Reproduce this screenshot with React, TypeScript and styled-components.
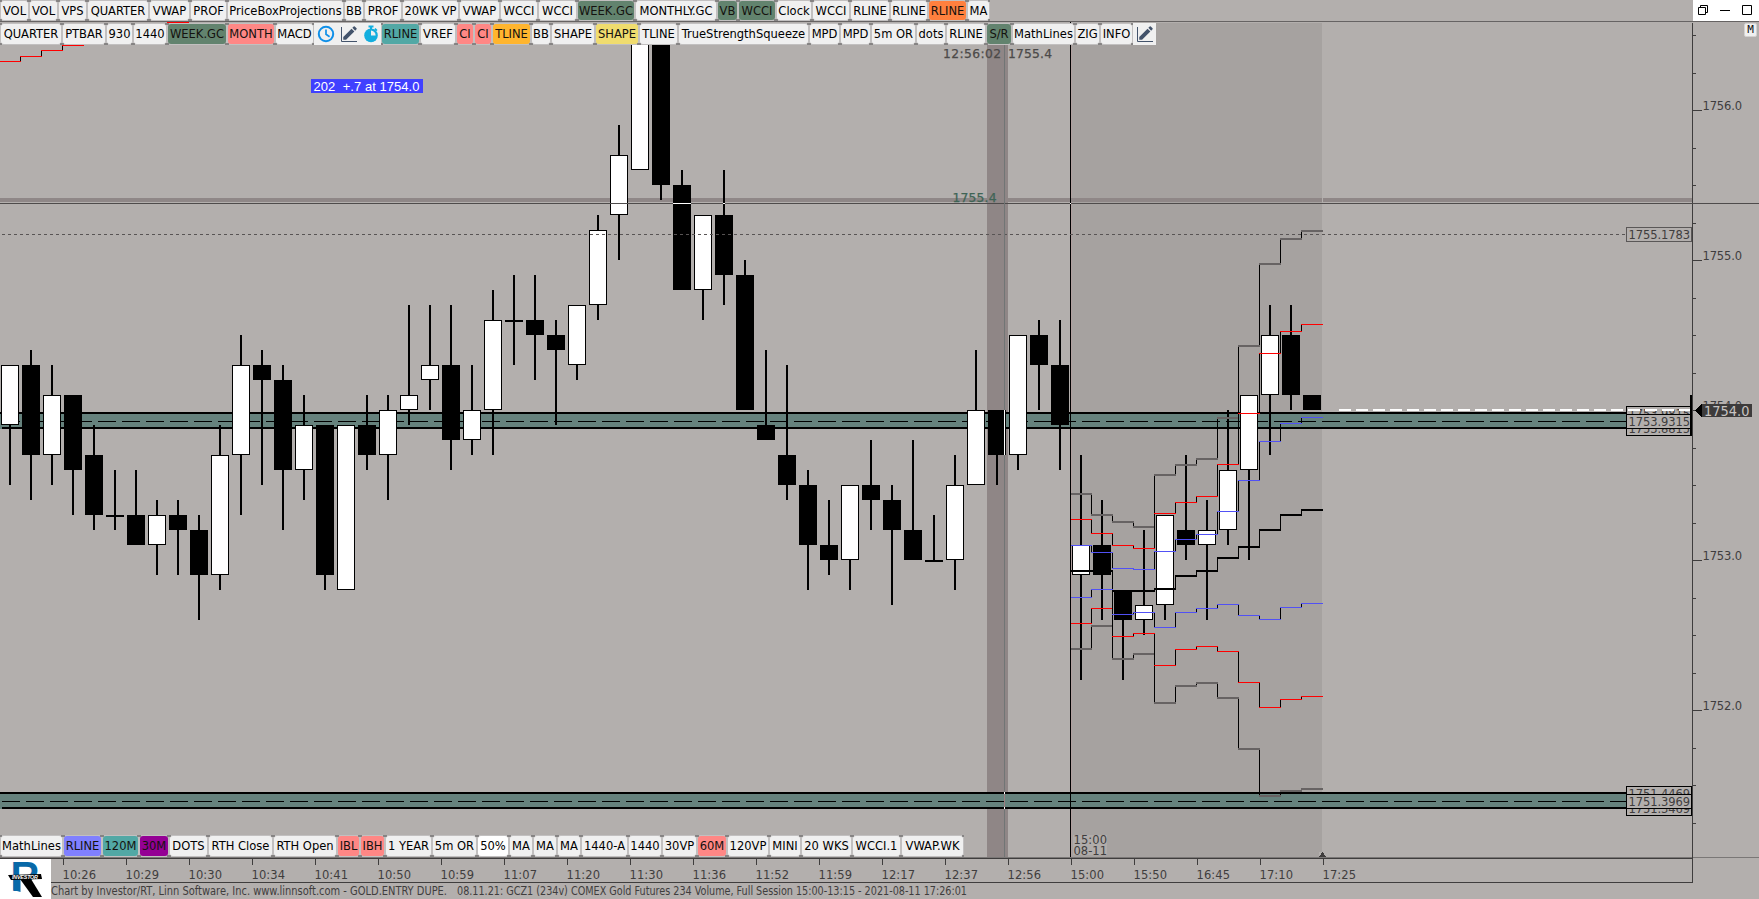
import styled, { createGlobalStyle } from "styled-components";
import { MdEdit as Edit_icon } from "react-icons/md";

const GlobalStyle = createGlobalStyle`
  * {
    box-sizing: border-box;
  }

  body {
    margin: 0;
    background: #b3afad;
    font-family: "DejaVu Sans Condensed", "DejaVu Sans", "Noto Sans", sans-serif;
    font-stretch: condensed;
    overflow: hidden;
  }
`;

const Screen = styled.div`
  display: flex;
  flex-direction: column;
  width: 1759px;
  height: 899px;
  background: #b3afad;
  color: #3f3d3d;
`;

const TitleBar = styled.header`
  display: flex;
  justify-content: space-between;
  height: 22px;
  border-bottom: 1px solid #666363;
`;

const WindowControls = styled.div`
  display: flex;
  align-items: center;
  gap: 10px;
  width: 66px;
  padding: 0 5px 1px 4px;
  background: #fff;
`;

const Workspace = styled.main`
  display: flex;
  height: 835px;
`;

const ChartPane = styled.section`
  position: relative;
  width: 1692px;
  height: 835px;

  > svg {
    display: block;
  }
`;

const PriceAxis = styled.aside`
  position: relative;
  width: 67px;

  > svg {
    display: block;
  }
`;

const ModeBadge = styled.div`
  position: absolute;
  top: 1px;
  right: 2px;
  width: 13px;
  height: 14px;
  border: 1px solid #d4d2d1;
  border-radius: 2px;
  background: #f0f0f0;
  color: #111;
  font-family: "DejaVu Sans Mono", monospace;
  font-size: 11px;
  line-height: 12px;
  text-align: center;
`;

/* the dark dots sit where two neighbouring buttons meet */
const ToolButton = styled.button<{ $width: number; $color?: string }>`
  flex: none;
  width: ${(p) => p.$width}px;
  height: 100%;
  padding: 1px;
  border: 0;
  font: inherit;
  font-size: 12.8px;
  color: #000;
  background:
    linear-gradient(#858383, #858383) 0 0 / 2px 2px no-repeat,
    linear-gradient(#858383, #858383) 100% 0 / 2px 2px no-repeat,
    linear-gradient(#858383, #858383) 0 100% / 2px 2px no-repeat,
    linear-gradient(#858383, #858383) 100% 100% / 2px 2px no-repeat,
    #c2c0c0;

  span {
    display: flex;
    align-items: center;
    justify-content: center;
    height: 100%;
    border-radius: 3px;
    background: ${(p) => p.$color || "#f0f0f0"};
    color: ${(p) => (p.$color && p.$color !== "#fff" ? "#15120f" : "#000")};
    white-space: nowrap;
  }
`;

const Toolbar = styled.nav<{ $place?: "top" | "bottom" }>`
  display: flex;
  height: ${(p) => (p.$place ? 22 : 21)}px;

  ${(p) => p.$place && `position: absolute; left: 0; z-index: 2;`}
  ${(p) => p.$place === "top" && `top: 1px;`}
  ${(p) => p.$place === "bottom" && `bottom: 0;`}

  ${ToolButton} span {
    padding-bottom: ${(p) => (p.$place ? 2 : 0)}px;
  }
`;

const IconGroup = styled.div<{ $width: number }>`
  display: flex;
  align-items: center;
  justify-content: space-around;
  width: ${(p) => p.$width}px;
  padding-bottom: 1px;
  background: #f0f0f0;

  svg {
    display: block;
  }
`;

const TimeArea = styled.footer`
  display: flex;
  height: 42px;
`;

const LogoBox = styled.div`
  width: 51px;
  height: 40px;
  margin-top: 2px;
  background: #fff;
`;

const TimeColumn = styled.div`
  flex: 1;

  > svg {
    display: block;
  }
`;

const StatusLine = styled.div`
  display: flex;
  gap: 10px;
  height: 16px;

  svg {
    display: block;
    overflow: visible;
  }
`;

const GREEN = "#62836e";
const PINK = "#ff8785";
const TEAL = "#52a8a5";
const INK = "#3f3d3d";

// label, right edge, colour
type Tool = [string, number, string?];

const topTools: Tool[] = [
  ["VOL", 29],
  ["VOL", 58],
  ["VPS", 87],
  ["QUARTER", 149],
  ["VWAP", 190],
  ["PROF", 227],
  ["PriceBoxProjections", 344],
  ["BB", 364],
  ["PROF", 402],
  ["20WK VP", 459],
  ["VWAP", 500],
  ["WCCI", 538],
  ["WCCI", 577],
  ["WEEK.GC", 635, GREEN],
  ["MONTHLY.GC", 717],
  ["VB", 738, GREEN],
  ["WCCI", 776, GREEN],
  ["Clock", 812],
  ["WCCI", 850],
  ["RLINE", 890],
  ["RLINE", 928],
  ["RLINE", 967, "#ff803e"],
  ["MA", 990],
];

const studyTools: Tool[] = [
  ["QUARTER", 62],
  ["PTBAR", 106],
  ["930", 133],
  ["1440", 167],
  ["WEEK.GC", 227, GREEN],
  ["MONTH", 275, PINK],
  ["MACD", 314],
];

const drawTools: Tool[] = [
  ["RLINE", 420, TEAL],
  ["VREF", 456],
  ["CI", 474, PINK],
  ["CI", 492, PINK],
  ["TLINE", 531, "#ffb52e"],
  ["BB", 551],
  ["SHAPE", 595],
  ["SHAPE", 639, "#f0dc6e"],
  ["TLINE", 678],
  ["TrueStrengthSqueeze", 809],
  ["MPD", 840],
  ["MPD", 871],
  ["5m OR", 916],
  ["dots", 946],
  ["RLINE", 986],
  ["S/R", 1012, GREEN],
  ["MathLines", 1075],
  ["ZIG", 1100],
  ["INFO", 1133],
];

const bottomTools: Tool[] = [
  ["MathLines", 63],
  ["RLINE", 102, "#8080ff"],
  ["120M", 139, TEAL],
  ["30M", 169, "#940094"],
  ["DOTS", 208],
  ["RTH Close", 273],
  ["RTH Open", 337],
  ["IBL", 360, PINK],
  ["IBH", 385, PINK],
  ["1 YEAR", 432],
  ["5m OR", 477],
  ["50%", 509, "#fff"],
  ["MA", 533],
  ["MA", 557],
  ["MA", 581],
  ["1440-A", 628],
  ["1440", 662],
  ["30VP", 697],
  ["60M", 727, PINK],
  ["120VP", 769],
  ["MINI", 801],
  ["20 WKS", 852],
  ["WCCI.1", 901],
  ["VWAP.WK", 964],
];

// open, high, low, close in ticks of 0.1 above 1750.0
const candles = [
  [39, 43, 35, 43], [43, 44, 34, 37], [37, 43, 35, 41], [41, 41, 33, 36],
  [37, 39, 32, 33], [33, 36, 32, 33], [33, 36, 31, 31], [31, 34, 29, 33],
  [33, 34, 29, 32], [32, 33, 26, 29], [29, 39, 28, 37], [37, 45, 33, 43],
  [43, 44, 35, 42], [42, 43, 32, 36], [36, 41, 34, 39], [39, 39, 28, 29],
  [28, 39, 28, 39], [39, 41, 36, 37], [37, 41, 34, 40], [40, 47, 39, 41],
  [42, 47, 40, 43], [43, 47, 36, 38], [38, 43, 37, 40], [40, 48, 37, 46],
  [46, 49, 43, 46], [46, 49, 42, 45], [45, 46, 39, 44], [43, 47, 42, 47],
  [47, 53, 46, 52], [53, 59, 50, 57], [56, 65, 56, 65], [65, 65, 54, 55],
  [55, 56, 48, 48], [48, 53, 46, 53], [53, 56, 47, 49], [49, 50, 40, 40],
  [39, 44, 38, 38], [37, 43, 34, 35], [35, 36, 28, 31], [31, 34, 29, 30],
  [30, 35, 28, 35], [35, 38, 32, 34], [34, 35, 27, 32], [32, 38, 30, 30],
  [30, 33, 30, 30], [30, 37, 28, 35], [35, 44, 35, 40], [40, 40, 35, 37],
  [37, 45, 36, 45], [45, 46, 40, 43], [43, 46, 36, 39], [29, 37, 22, 31],
  [31, 34, 26, 29], [28, 28, 22, 26], [26, 32, 25, 27], [27, 33, 26, 33],
  [32, 37, 30, 31], [31, 34, 26, 32], [32, 40, 31, 36], [36, 41, 30, 41],
  [41, 47, 37, 45], [45, 47, 40, 41], [41, 41, 40, 40],
];

const priceY = (p: number) => 1010 - 15 * p;

interface Band {
  color: string;
  size: number;
  ys: number[];
}

// top pixel row of each step, one per bar of the session
const bands: Band[] = [
  { color: "#676363", size: 2, ys: [493, 514, 521, 526, 474, 464, 458, 417, 345, 263, 238, 230] },
  { color: "#676363", size: 2, ys: [648, 625, 658, 653, 702, 685, 682, 697, 748, 795, 790, 788] },
  { color: "#ff0000", size: 1, ys: [519, 533, 545, 548, 513, 502, 496, 464, 413, 353, 331, 324] },
  { color: "#ff0000", size: 1, ys: [623, 608, 636, 633, 665, 649, 646, 651, 682, 707, 699, 696] },
  { color: "#000", size: 2, ys: [570, 570, 590, 590, 588, 575, 570, 557, 546, 529, 514, 509] },
  { color: "#5151f5", size: 1, ys: [545, 552, 568, 569, 551, 539, 534, 511, 480, 441, 423, 417] },
  { color: "#5151f5", size: 1, ys: [597, 589, 614, 612, 627, 612, 608, 604, 615, 619, 607, 603] },
];

const times = [
  "10:26", "10:29", "10:30", "10:34", "10:41", "10:50", "10:59",
  "11:07", "11:20", "11:30", "11:36", "11:52", "11:59", "12:17",
  "12:37", "12:56", "15:00", "15:50", "16:45", "17:10", "17:25",
];

const ClockIcon = () => (
  <svg width="18" height="18" viewBox="0 0 18 18" fill="none" stroke="#0f8fe8" strokeWidth="2">
    <circle cx="9" cy="9" r="7.2" />
    <path d="M9 4.5V9.3l3.6 2.4" strokeWidth="1.7" />
  </svg>
);

const PencilIcon = () => (
  <svg width="18" height="18" viewBox="0 0 18 18">
    <path d="M1.5 2v14.5H17" fill="none" stroke="#43536b" strokeWidth="1" />
    <Edit_icon x="1" y="-1" size={18} color="#43536b" />
  </svg>
);

const TimerIcon = () => (
  <svg width="16" height="18" viewBox="0 0 16 18">
    <path d="M5.5 0.5h5v2h-5zM7 2h2v2H7zM12.5 3l2 2-1.3 1.3-2-2z" fill="#12aede" />
    <circle cx="8" cy="10.4" r="6.8" fill="#12aede" />
    <path d="M8 5.6v4.8h4.6A4.8 4.8 0 0 0 8 5.6z" fill="#f0f0f0" />
  </svg>
);

const ToolButtons = ({ tools, start = 0 }: { tools: Tool[]; start?: number }) => (
  <>
    {tools.map(([label, right, color], i) => {
      const left = i ? tools[i - 1][1] : start;
      return (
        <ToolButton key={i} $width={right - left} $color={color}>
          <span>{label}</span>
        </ToolButton>
      );
    })}
  </>
);

const Zone = ({ y }: { y: number }) => (
  <g>
    <rect x="0" y={y} width="1626" height="17" fill="#66827d" />
    <rect x="0" y={y} width="1626" height="2" />
    <rect x="2" y={y + 15} width="1624" height="2" />
    <path d={`M2 ${y + 9.5}H1626`} stroke="#000" strokeDasharray="18 6" />
  </g>
);

const Candle = ({ index, bar }: { index: number; bar: number[] }) => {
  const [open, high, low, close] = bar;
  const x = 1 + 21 * index;
  const top = priceY(Math.max(open, close));
  const height = Math.max(2, Math.abs(open - close) * 15);
  return (
    <g>
      <rect x={x + 8} y={priceY(high)} width="2" height={(high - low) * 15} />
      {close > open ? (
        <rect x={x + 0.5} y={top + 0.5} width="17" height={height - 1} fill="#fff" stroke="#000" />
      ) : (
        <rect x={x} y={top} width="18" height={height} />
      )}
    </g>
  );
};

const StepLine = ({ band }: { band: Band }) => (
  <g>
    {band.ys.slice(1).map((y, i) => {
      const prev = band.ys[i];
      return (
        <rect
          key={i}
          x={1091 + 21 * i}
          y={Math.min(y, prev)}
          width="1"
          height={Math.abs(y - prev) + band.size}
        />
      );
    })}
    {band.ys.map((y, i) => (
      <rect
        key={i}
        x={(i ? 1070 : 1071) + 21 * i}
        y={y}
        width={i ? 22 : 21}
        height={band.size}
        fill={band.color}
      />
    ))}
  </g>
);

const PriceTag = ({ y, color = "#000", children }: { y: number; color?: string; children: string }) => (
  <g>
    <rect x="1626.5" y={y + 0.5} width="65" height="14" fill="#b3afad" stroke={color} />
    <text x="1628.5" y={y + 12} fontSize="12.8" textLength="61.5" fill={INK}>
      {children}
    </text>
  </g>
);

const PriceChart = () => (
  <svg width="1692" height="835" viewBox="0 22 1692 835" shapeRendering="crispEdges">
    <rect x="1071" y="23" width="251" height="834" fill="#a6a2a0" />
    <rect x="1071" y="23" width="1" height="834" fill="#b09f9e" />
    <rect x="0" y="198" width="1692" height="4" fill="#8f8787" />
    <rect x="1322" y="198" width="1" height="4" fill="#b3afad" />
    <rect x="987" y="23" width="21" height="834" fill="#8f8686" />

    <Zone y={412} />
    <Zone y={792} />

    <path d="M20.5 56V62M41.5 50V57M62.5 45V51" stroke="#000" />
    <path d="M0 61.5H21M20 56.5H42M41 50.5H63M62 45.5H84M167 22.5H189" stroke="#f00" />

    {candles.map((bar, i) => (
      <Candle key={i} index={i} bar={bar} />
    ))}

    <rect x="1070" y="22" width="1" height="835" />
    {bands.map((band, i) => (
      <StepLine key={i} band={band} />
    ))}

    <path d="M2 234.5H1626" stroke="#585454" strokeDasharray="3 3" />

    {/* crosshair, inverted where it passes over bars */}
    <rect x="0" y="203" width="1692" height="1" fill="#4e4b4b" />
    <rect x="673" y="203" width="18" height="1" fill="#fff" />
    <rect x="723" y="203" width="2" height="1" fill="#fff" />
    <rect x="1070" y="203" width="1" height="1" fill="#fff" />
    <rect x="1004" y="23" width="1" height="834" fill="#717575" />
    <rect x="1004" y="410" width="1" height="45" fill="#fff" />
    <rect x="1004" y="792" width="1" height="17" fill="#fff" />
    <rect x="1004" y="794" width="1" height="13" fill="#9c7d80" />

    <g
      fontFamily="DejaVu Sans"
      fontStretch="normal"
      fontSize="12.3"
      fill="#4c4a49"
      stroke="#4c4a49"
      strokeWidth="0.25"
    >
      <text x="943" y="57.5" textLength="58">12:56:02</text>
      <text x="1008" y="57.5" textLength="44">1755.4</text>
      <text x="952.5" y="202" textLength="44" fill="#3e6455" stroke="#3e6455">1755.4</text>
    </g>

    <rect x="311" y="79" width="112" height="14" fill="#4040ff" />
    <text
      x="313.5"
      y="91"
      fontFamily="Liberation Sans"
      fontSize="13"
      textLength="106"
      fill="#fff"
      style={{ whiteSpace: "pre" }}
    >
      {"202  +.7 at 1754.0"}
    </text>

    <rect x="1073" y="835" width="34" height="20" fill="#b0acaa" />
    <g fontSize="12.8" fill={INK}>
      <text x="1073.5" y="844" textLength="33.5">15:00</text>
      <text x="1073.5" y="855" textLength="33.5">08-11</text>
    </g>
    <rect x="1319" y="852" width="4" height="5" fill="#b3afad" />
    <path d="M1322.5 852L1326 857H1319z" fill={INK} />

    <PriceTag y={227} color="#5a5757">1755.1783</PriceTag>
    <PriceTag y={406}>1753.9815</PriceTag>
    <PriceTag y={421}>1753.8815</PriceTag>
    <PriceTag y={414}>1753.9315</PriceTag>
    <PriceTag y={786}>1751.4469</PriceTag>
    <PriceTag y={801}>1751.3469</PriceTag>
    <PriceTag y={794}>1751.3969</PriceTag>
    <path d="M1339 410H1691" stroke="#fff" strokeWidth="2" strokeDasharray="12 5" />
    <rect x="1690" y="395" width="2" height="41" />
  </svg>
);

const PriceScale = () => (
  <svg width="67" height="835" viewBox="1692 22 67 835" shapeRendering="crispEdges">
    <rect x="1692" y="23" width="1" height="834" fill={INK} />
    {Array.from({ length: 22 }, (_, i) => {
      const y = Math.floor(35.5 + 37.5 * i);
      const major = i % 4 === 2;
      return <rect key={i} x="1693" y={y} width={major ? 9 : 3} height="1" fill={INK} />;
    })}
    {[1756, 1755, 1754, 1753, 1752].map((price, i) => (
      <text key={price} x="1702.5" y={110 + 150 * i} fontSize="12.8" textLength="39.5" fill={INK}>
        {`${price}.0`}
      </text>
    ))}
    <rect x="1692" y="203" width="67" height="1" fill="#4e4b4b" />
    <path d="M1695 410.5L1702 404V417z" fill="#000" />
    <rect x="1702" y="404" width="50" height="13" fill="#3d3b3b" />
    <text x="1704" y="415.5" fontSize="14.4" textLength="45.5" fill="#c8c4c2">
      1754.0
    </text>
  </svg>
);

const TimeScale = () => (
  <svg width="1708" height="26" viewBox="51 857 1708 26" shapeRendering="crispEdges" overflow="visible">
    <rect x="0" y="857" width="1759" height="1" fill="#7a7776" />
    <rect x="0" y="858" width="1693" height="1" fill={INK} />
    <rect x="51" y="882" width="1642" height="1" fill={INK} />
    <rect x="1692" y="857" width="1" height="26" fill={INK} />
    {times.map((time, i) => (
      <g key={time}>
        <rect x={63 + 63 * i} y="859" width="1" height="6" fill={INK} />
        <text x={62.5 + 63 * i} y="879" fontSize="12.8" textLength="33.5" fill={INK}>
          {time}
        </text>
      </g>
    ))}
  </svg>
);

const Logo = () => (
  <svg width="51" height="40" viewBox="0 859 51 40">
    <text
      x="10.5"
      y="890.5"
      fontFamily="Liberation Sans"
      fontStretch="normal"
      fontWeight="bold"
      fontSize="42"
      textLength="29"
      lengthAdjust="spacingAndGlyphs"
      fill="#0869a8"
    >
      R
    </text>
    <path d="M20 880H52V899H20z" fill="#fff" />
    <path d="M20 879H31L42 897H33z" fill="#000" />
    <path d="M13.5 879H20.5V892L13.5 890z" fill="#0869a8" />
    <path d="M8 875L41 874L42 879L11 880z" fill="#000" />
    <text
      x="12"
      y="879"
      fontFamily="Liberation Sans"
      fontWeight="bold"
      fontStyle="italic"
      fontSize="5.4"
      textLength="26"
      fill="#fff"
    >
      INVESTOR
    </text>
  </svg>
);

export default function App() {
  return (
    <Screen>
      <GlobalStyle />
      <TitleBar>
        <Toolbar>
          <ToolButtons tools={topTools} />
        </Toolbar>
        <WindowControls>
          <svg width="12" height="12" fill="none" stroke="#000">
            <path d="M1.5 3.5h7v7h-7zM3.5 3.5v-2h7v7h-2" />
          </svg>
          <svg width="12" height="12" stroke="#000">
            <path d="M1 6.5h10" />
          </svg>
          <svg width="12" height="12" fill="none" stroke="#000">
            <path d="M1.5 1.5h9v9h-9z" />
          </svg>
        </WindowControls>
      </TitleBar>

      <Workspace>
        <ChartPane>
          <PriceChart />
          <Toolbar $place="top">
            <ToolButtons tools={studyTools} />
            <IconGroup $width={67}>
              <ClockIcon />
              <PencilIcon />
              <TimerIcon />
            </IconGroup>
            <ToolButtons tools={drawTools} start={381} />
            <IconGroup $width={23}>
              <PencilIcon />
            </IconGroup>
          </Toolbar>
          <Toolbar $place="bottom">
            <ToolButtons tools={bottomTools} />
          </Toolbar>
        </ChartPane>
        <PriceAxis>
          <PriceScale />
          <ModeBadge>M</ModeBadge>
        </PriceAxis>
      </Workspace>

      <TimeArea>
        <LogoBox>
          <Logo />
        </LogoBox>
        <TimeColumn>
          <TimeScale />
          <StatusLine>
            <svg width="396" height="16" fontSize="11.8" fill={INK}>
              <text x="0" y="12" textLength="396" lengthAdjust="spacingAndGlyphs">
                Chart by Investor/RT, Linn Software, Inc. www.linnsoft.com - GOLD.ENTRY DUPE.
              </text>
            </svg>
            <svg width="511" height="16" fontSize="11.8" fill={INK}>
              <text x="0" y="12" textLength="510" lengthAdjust="spacingAndGlyphs">
                08.11.21: GCZ1 (234v) COMEX Gold Futures 234 Volume, Full Session 15:00-13:15 - 2021-08-11 17:26:01
              </text>
            </svg>
          </StatusLine>
        </TimeColumn>
      </TimeArea>
    </Screen>
  );
}
